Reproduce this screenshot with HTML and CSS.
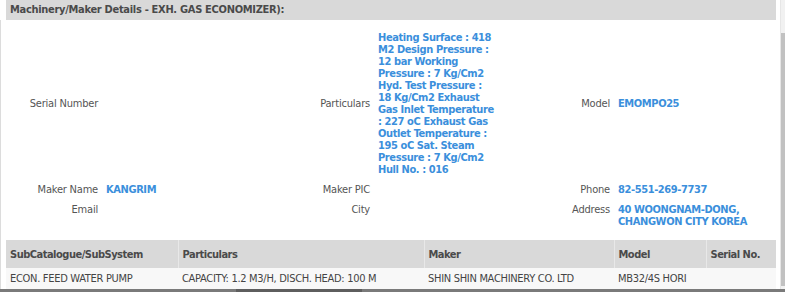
FILE: index.html
```html
<!DOCTYPE html>
<html>
<head>
<meta charset="utf-8">
<link rel="stylesheet" href="styles.css">
</head>
<body>
<div class="page">
  <div class="main">
    <div class="title">Machinery/Maker Details - EXH. GAS ECONOMIZER):</div>
    <div class="body">
      <div class="details">
        <div class="lbl">Serial Number</div>
        <div class="val"></div>
        <div class="lbl">Particulars</div>
        <div class="val nowrap">Heating Surface : 418<br>M2 Design Pressure :<br>12 bar Working<br>Pressure : 7 Kg/Cm2<br>Hyd. Test Pressure :<br>18 Kg/Cm2 Exhaust<br>Gas Inlet Temperature<br>: 227 oC Exhaust Gas<br>Outlet Temperature :<br>195 oC Sat. Steam<br>Pressure : 7 Kg/Cm2<br>Hull No. : 016</div>
        <div class="lbl">Model</div>
        <div class="val">EMOMPO25</div>

        <div class="lbl">Maker Name</div>
        <div class="val">KANGRIM</div>
        <div class="lbl">Maker PIC</div>
        <div class="val"></div>
        <div class="lbl">Phone</div>
        <div class="val">82-551-269-7737</div>

        <div class="lbl top">Email</div>
        <div class="val"></div>
        <div class="lbl top">City</div>
        <div class="val"></div>
        <div class="lbl top">Address</div>
        <div class="val">40 WOONGNAM-DONG,<br>CHANGWON CITY KOREA</div>
      </div>
      <table class="list">
        <colgroup>
          <col class="c1"><col class="c2"><col class="c3"><col class="c4"><col class="c5">
        </colgroup>
        <thead>
          <tr>
            <th>SubCatalogue/SubSystem</th>
            <th>Particulars</th>
            <th>Maker</th>
            <th>Model</th>
            <th>Serial No.</th>
          </tr>
        </thead>
        <tbody>
          <tr>
            <td>ECON. FEED WATER PUMP</td>
            <td>CAPACITY: 1.2 M3/H, DISCH. HEAD: 100 M</td>
            <td>SHIN SHIN MACHINERY CO. LTD</td>
            <td>MB32/4S HORI</td>
            <td></td>
          </tr>
        </tbody>
      </table>
    </div>
  </div>
  <div class="vscroll"><div class="vthumb"></div></div>
</div>
<div class="hscroll"><div class="hthumb"></div></div>
</body>
</html>
```
FILE: styles.css
```css
* { box-sizing: border-box; }
html, body { margin: 0; padding: 0; background: #fff; }
body {
  width: 785px;
  height: 292px;
  overflow: hidden;
  font-family: "DejaVu Sans Condensed", "DejaVu Sans", sans-serif;
  font-stretch: condensed;
  font-size: 11px;
  color: #555;
}
.page {
  display: flex;
  height: 289px;
}
.main {
  width: 780px;
}
.title {
  margin-left: 6px;
  width: 770px;
  height: 20px;
  line-height: 20px;
  background: #d9d9d9;
  padding-left: 4px;
  font-weight: bold;
  letter-spacing: -0.3px;
  color: #4a4a4a;
}
.body {
  border-left: 1px solid #dcdcdc;
  padding-left: 5px;
  height: 269px;
}
.details {
  display: grid;
  grid-template-columns: 96px 176px 96px 134px 106px 162px;
  width: 770px;
  padding-top: 8px;
  line-height: 12px;
}
.lbl {
  text-align: right;
  padding: 4px;
  align-self: center;
  color: #555;
  letter-spacing: -0.2px;
}
.lbl.top { align-self: start; }
.val {
  padding: 4px;
  align-self: center;
  font-weight: bold;
  letter-spacing: -0.4px;
  color: #3b8fdc;
}
.val.nowrap { white-space: nowrap; }
.list {
  margin-top: 8px;
  width: 770px;
  border-collapse: collapse;
  table-layout: fixed;
}
.c1 { width: 172px; }
.c2 { width: 246px; }
.c3 { width: 190px; }
.c4 { width: 92px; }
.c5 { width: 70px; }
.list th {
  height: 28px;
  background: #d9d9d9;
  text-align: left;
  padding: 0 4px;
  font-weight: bold;
  letter-spacing: -0.5px;
  color: #4a4a4a;
  border-left: 1px solid #e8e8e8;
}
.list th:first-child { border-left: none; }
.list td {
  height: 21px;
  background: #f8f8f8;
  padding: 0 4px;
  color: #444;
  letter-spacing: -0.3px;
  white-space: nowrap;
  overflow: hidden;
}
.vscroll {
  width: 5px;
  border-left: 1px solid #e6e6e6;
  background: #f1f1f1;
  padding-top: 33px;
  display: flex;
}
.vthumb {
  flex: 1;
  height: 253px;
  background: #c1c1c1;
}
.hscroll {
  height: 3px;
  background: #7a7a7a;
  padding-left: 236px;
}
.hthumb {
  width: 126px;
  height: 3px;
  background: #5e5e5e;
}
```
